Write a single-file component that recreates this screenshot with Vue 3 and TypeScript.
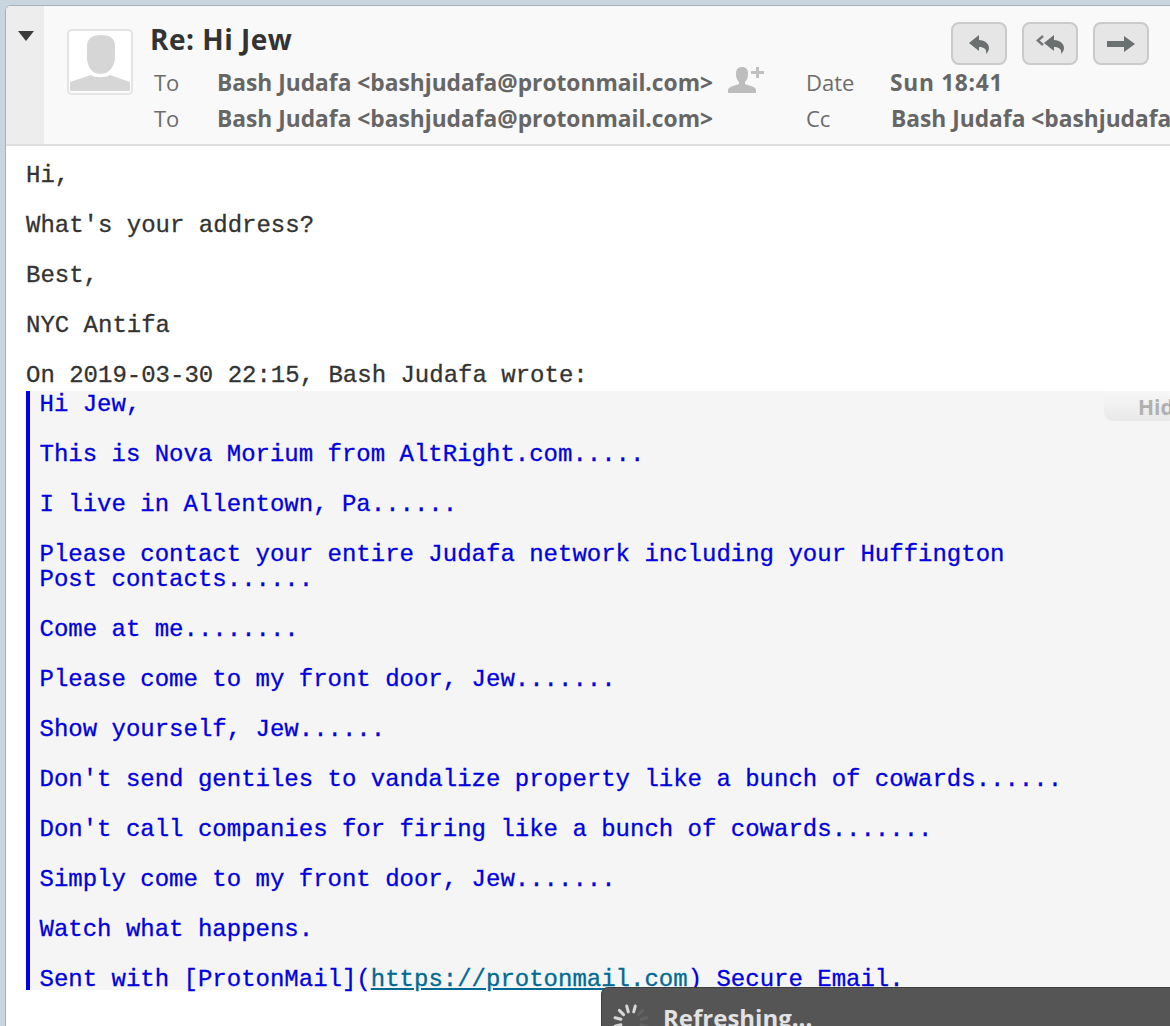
<script setup lang="ts">
const quote: string[] = [
  "Hi Jew,", "", "This is Nova Morium from AltRight.com.....", "", "I live in Allentown, Pa......", "",
  "Please contact your entire Judafa network including your Huffington", "Post contacts......", "",
  "Come at me........", "", "Please come to my front door, Jew.......", "", "Show yourself, Jew......", "",
  "Don't send gentiles to vandalize property like a bunch of cowards......", "",
  "Don't call companies for firing like a bunch of cowards.......", "",
  "Simply come to my front door, Jew.......", "", "Watch what happens.", ""
];
const intro: string[] = ["Hi,", "", "What's your address?", "", "Best,", "", "NYC Antifa", "", "On 2019-03-30 22:15, Bash Judafa wrote:"];
const spokes = [0, 1, 2, 3, 4, 5, 6, 7, 8, 9, 10, 11];
</script>

<template>
  <div class="page">
    <div class="window">
      <header class="head">
        <div class="toggle"><span class="tri"></span></div>
        <div class="avatar">
          <svg width="62" height="62" viewBox="0 0 62 62">
            <path fill="#d6d6d6" d="M18 15C18 7 24 4 32 4s14 3 14 11v12c0 7-5 13-9 15-3 1-8 1-11 0-4-2-8-8-8-15z"/>
            <path fill="#d6d6d6" d="M1 60v-9l21-7c3 3 15 3 19 0l20 7v9z"/>
          </svg>
        </div>
        <div class="meta">
          <div class="subject">Re: Hi Jew</div>
          <div class="row r1">
            <span class="lab">To</span>
            <span class="val addr">Bash Judafa &lt;bashjudafa@protonmail.com&gt;</span>
            <svg class="add" width="38" height="28" viewBox="0 0 38 28">
              <path fill="#bdbdbd" d="M0 27v-3c0-2 2-3 5-4l6-2v-2c-2-2-3-4-3-8 0-5 2-7 6-7s6 2 6 7c0 4-1 6-3 8v2l6 2c3 1 5 2 5 4v3z"/>
              <path fill="#c0c0c0" d="M23 5h5V1h3v4h5v3h-5v4h-3V8h-5z"/>
            </svg>
            <span class="lab lab2">Date</span>
            <span class="val date">Sun 18:41</span>
          </div>
          <div class="row r2">
            <span class="lab">To</span>
            <span class="val addr">Bash Judafa &lt;bashjudafa@protonmail.com&gt;</span>
            <span class="lab lab2 cc">Cc</span>
            <span class="val">Bash Judafa &lt;bashjudafa@protonmail.com&gt;</span>
          </div>
        </div>
        <div class="actions">
          <button class="act" aria-label="Reply">
            <svg width="20" height="20" viewBox="0 0 20 20"><path fill="#6a6f70" d="M0 9l10-8v5c6 0 10 4 10 8 0 2-1 4-3 6 1-5-2-7-7-7v4z"/></svg>
          </button>
          <button class="act" aria-label="Reply all">
            <svg width="28" height="20" viewBox="0 0 28 20"><path fill="none" stroke="#777" stroke-width="2.4" d="M7 2L1.8 6.5 7 11"/><path fill="#6a6f70" d="M8 9l10-8v5c6 0 10 4 10 8 0 2-1 4-3 6 1-5-2-7-7-7v4z"/></svg>
          </button>
          <button class="act" aria-label="Forward">
            <svg width="28" height="18" viewBox="0 0 28 18"><path fill="#6a6f70" d="M0 6h17V1l11 8-11 8v-5H0z"/></svg>
          </button>
        </div>
      </header>
      <main class="body">
        <div class="intro">
          <div v-for="(l, i) in intro" :key="i" class="line">{{ l }}</div>
        </div>
        <div class="quote">
          <span class="hide">Hide</span>
          <div v-for="(l, i) in quote" :key="i" class="line">{{ l }}</div>
          <div class="line">Sent with [ProtonMail](<a class="link">https://protonmail.com</a>) Secure Email.</div>
        </div>
      </main>
    </div>
    <div class="toast">
      <svg class="spin" width="40" height="40" viewBox="0 0 40 40">
        <rect v-for="s in spokes" :key="s" x="18.5" y="2" width="3" height="9" rx="1.5" :fill="s < 5 ? '#d8d8d8' : '#626262'" :transform="`rotate(${s * 30 - 105} 20 20)`"/>
      </svg>
      <span class="toast-text">Refreshing...</span>
    </div>
  </div>
</template>

<style>
html, body { margin: 0; background: #fff; overflow: hidden; }
</style>

<style scoped>
.page {
  width: 1170px; height: 1026px; overflow: hidden; position: relative;
  background: #c9d6e0; padding: 5px 0 0 5px; box-sizing: border-box;
}
.window { width: 1165px; height: 1021px; background: #fff; border-top-left-radius: 6px; overflow: hidden; border-top: 1px solid #a4b0ba; border-left: 1px solid #a4b0ba; box-sizing: border-box; }
.head { height: 140px; box-sizing: border-box; display: flex; background: #f9f9f9; border-bottom: 2px solid #dedede; position: relative; }
.toggle { width: 38px; background: #ededed; flex: none; }
.tri { display: block; margin: 25px 0 0 12px; width: 0; height: 0; border-left: 8px solid transparent; border-right: 8px solid transparent; border-top: 10px solid #3a3a3a; }
.avatar { flex: none; width: 62px; height: 62px; margin: 23px 0 0 23px; border: 2px solid #e4e4e4; border-radius: 5px; background: #fff; display: flex; }
.meta { margin-left: 16px; font-family: "Open Sans", sans-serif; min-width: 0; flex: 1; padding-top: 14px; }
.subject { font-size: 28px; font-weight: 700; color: #333; line-height: 38px; letter-spacing: 0.5px; padding-left: 1px; }
.row { display: flex; align-items: center; height: 36px; white-space: nowrap; font-size: 22.75px; }
.r1 { margin-top: 6px; }
.r2 { margin-top: 0; }
.lab { color: #6c6c6c; width: 63px; flex: none; padding-left: 5px; font-size: 22px; }
.lab2 { width: 84px; padding-left: 0; }
.cc { margin-left: 94px; width: 85px; }
.val { font-weight: 700; color: #666; }
.date { letter-spacing: 0.7px; }
.addr { width: 495px; flex: none; }
.add { margin: -4px 40px 0 16px; flex: none; }
.actions { position: absolute; top: 16px; right: 21px; display: flex; gap: 15px; }
.act { width: 56px; height: 43px; box-sizing: border-box; border: 2px solid #cacaca; border-radius: 8px; background: #e6e6e6; display: flex; align-items: center; justify-content: center; padding: 0; }
.body { font-family: "Liberation Mono", monospace; font-size: 24px; line-height: 25px; white-space: pre; -webkit-text-stroke: 0.3px; }
.intro { padding: 17px 0 0 20px; color: #333; }
.line { height: 25px; }
.quote { position: relative; margin: 3px 0 0 20px; height: 599px; box-sizing: border-box; padding: 1px 0 0 9.5px; background: #f5f5f5; border-left: 4px solid #0000e6; color: #0000e0; }
.link { color: #006a94; text-decoration: underline; }
.hide { position: absolute; left: 1074px; top: 0; width: 90px; height: 30px; box-sizing: border-box; padding: 2px 0 0 34px; font: 700 21px "Open Sans", sans-serif; color: #b0b0b0; background: linear-gradient(#f7f7f7, #e8e8e8); border-bottom-left-radius: 9px; -webkit-text-stroke: 0; }
.toast { position: absolute; left: 601px; top: 987px; width: 600px; height: 80px; background: #555; border: 1px solid #3f3f3f; border-radius: 7px 0 0 0; box-sizing: border-box; display: flex; align-items: flex-start; padding: 14px 0 0 9px; }
.spin { flex: none; }
.toast-text { margin-left: 12px; margin-top: 1px; font: 700 24px/30px "Open Sans", sans-serif; color: #e2e2e2; }
</style>
